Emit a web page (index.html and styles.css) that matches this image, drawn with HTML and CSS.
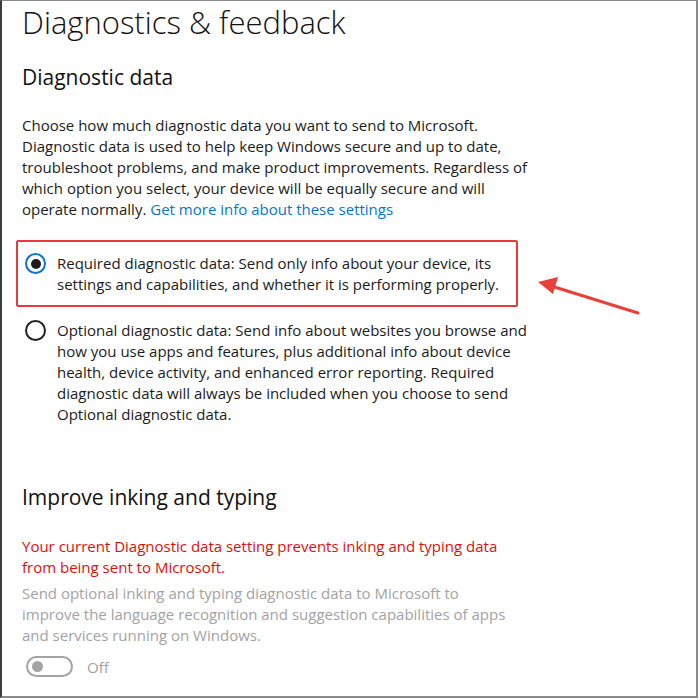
FILE: index.html
```html
<!DOCTYPE html>
<html lang="en">
<head>
    <meta charset="UTF-8">
    <title>Diagnostics &amp; feedback</title>
    <link rel="stylesheet" href="styles.css">
</head>
<body>

    <div class="frame">
        <h1 class="page-title">Diagnostics &amp; feedback</h1>

        <h2 class="section-title">Diagnostic data</h2>
        <p class="intro">
            Choose how much diagnostic data you want to send to Microsoft.<br>
            Diagnostic data is used to help keep Windows secure and up to date,<br>
            troubleshoot problems, and make product improvements. Regardless of<br>
            which option you select, your device will be equally secure and will<br>
            operate normally. <a href="#" class="link">Get more info about these settings</a>
        </p>

        <div class="option-list">
            <label class="option highlighted">
                <span class="radio checked"></span>
                <span class="option-text">
                    Required diagnostic data: Send only info about your device, its<br>
                    settings and capabilities, and whether it is performing properly.
                </span>
            </label>

            <label class="option">
                <span class="radio"></span>
                <span class="option-text">
                    Optional diagnostic data: Send info about websites you browse and<br>
                    how you use apps and features, plus additional info about device<br>
                    health, device activity, and enhanced error reporting. Required<br>
                    diagnostic data will always be included when you choose to send<br>
                    Optional diagnostic data.
                </span>
            </label>
        </div>

        <h2 class="section-title inking-title">Improve inking and typing</h2>
        <p class="warning">
            Your current Diagnostic data setting prevents inking and typing data<br>
            from being sent to Microsoft.
        </p>
        <p class="disabled-text">
            Send optional inking and typing diagnostic data to Microsoft to<br>
            improve the language recognition and suggestion capabilities of apps<br>
            and services running on Windows.
        </p>

        <div class="toggle-row">
            <span class="toggle"><span class="toggle-knob"></span></span>
            <span class="toggle-label">Off</span>
        </div>

        <!-- callout arrow pointing at the highlighted option -->
        <svg class="callout-arrow" width="110" height="44" viewBox="0 0 110 44">
            <line x1="104" y1="39" x2="14" y2="11" stroke="#e8403b" stroke-width="3" stroke-linecap="round"/>
            <path d="M4 8 L24 3 L19 20 Z" fill="#e8403b"/>
        </svg>
    </div>

</body>
</html>
```

FILE: styles.css
```css
* {
    box-sizing: border-box;
}

body {
    margin: 0;
    background: #fff;
    font-family: 'Open Sans', 'Noto Sans', sans-serif;
    color: #1b1b1b;
}

/* Outer screenshot frame */
.frame {
    position: relative;
    width: 698px;
    height: 698px;
    border: 1px solid #8a8a8a;
    border-left: 2px solid #3c3c3c;
    border-right: 2px solid #8a8a8a;
    border-bottom: 2px solid #8a8a8a;
    padding: 0 0 0 20px;
    overflow: hidden;
}

.page-title {
    font-size: 31px;
    font-weight: 300;
    line-height: 40px;
    margin: 1px 0 0;
    color: #111;
}

.section-title {
    font-size: 21px;
    font-weight: 400;
    line-height: 28px;
    margin: 21px 0 0;
    color: #111;
}

.intro {
    font-size: 15px;
    line-height: 21px;
    margin: 24px 0 0;
}

.link {
    color: #0a74d0;
    text-decoration: none;
}

/* Radio options */
.option-list {
    display: flex;
    flex-direction: column;
    gap: 13px;
    margin-top: 20px;
}

.option {
    display: flex;
    align-items: flex-start;
    gap: 11px;
    font-size: 15px;
    line-height: 21px;
    padding: 0 0 0 3px;
    width: 512px;
}

.option.highlighted {
    margin-left: -6px;
    padding: 11px 10px 10px 7px;
    border: 2px solid #e53b3b;
    border-radius: 2px;
    width: 502px;
}

.radio {
    flex-shrink: 0;
    width: 21px;
    height: 21px;
    border: 2px solid #222;
    border-radius: 50%;
    display: flex;
    align-items: center;
    justify-content: center;
}

.radio.checked {
    border-color: #0a74d0;
}

.radio.checked::after {
    content: "";
    width: 10px;
    height: 10px;
    border-radius: 50%;
    background: #1b1b1b;
}

.inking-title {
    margin-top: 58px;
}

.warning {
    font-size: 15px;
    line-height: 21px;
    margin: 25px 0 0;
    color: #e10e0e;
}

.disabled-text {
    font-size: 15px;
    line-height: 21px;
    margin: 5px 0 0;
    color: #a3a3a3;
}

/* Toggle switch (disabled, off) */
.toggle-row {
    display: flex;
    align-items: center;
    gap: 14px;
    margin-top: 10px;
    padding-left: 4px;
}

.toggle {
    width: 47px;
    height: 21px;
    border: 2px solid #a3a3a3;
    border-radius: 11px;
    display: flex;
    align-items: center;
    padding-left: 4px;
}

.toggle-knob {
    width: 11px;
    height: 11px;
    border-radius: 50%;
    background: #a3a3a3;
}

.toggle-label {
    font-size: 15px;
    color: #a3a3a3;
}

.callout-arrow {
    position: absolute;
    left: 532px;
    top: 273px;
}
```
